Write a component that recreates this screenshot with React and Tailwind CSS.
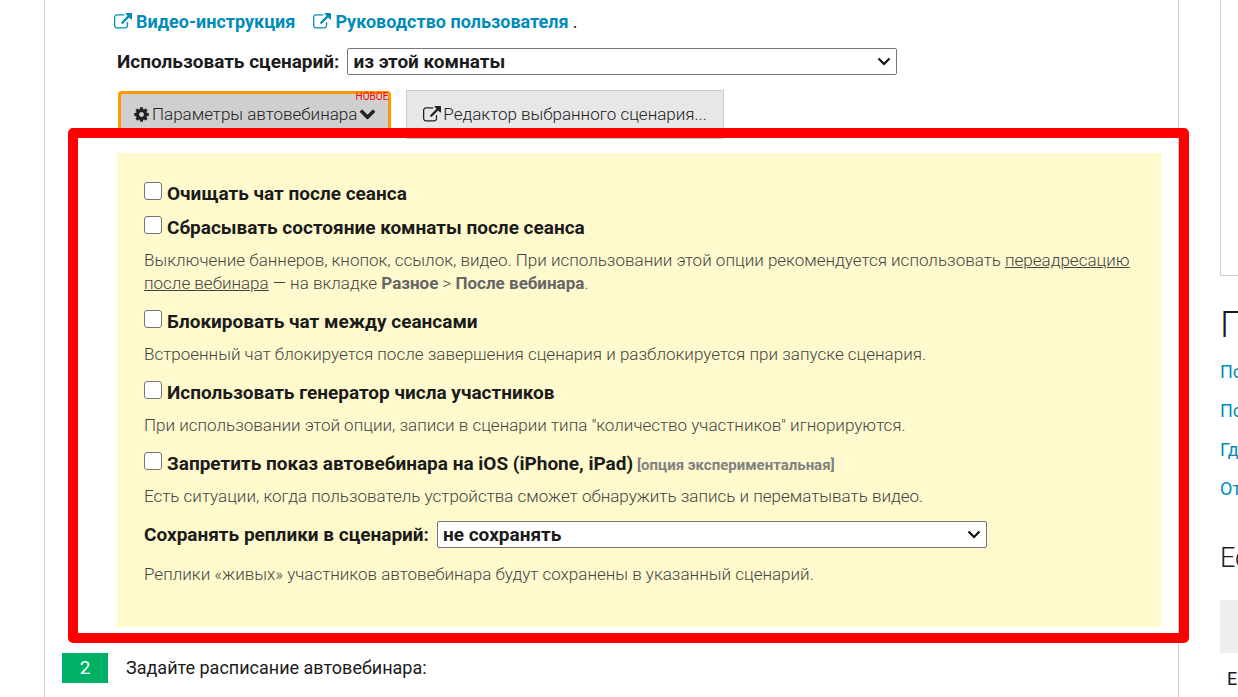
import React from "react";

function Icon({ d, className }) {
  return (
    <svg viewBox="0 0 1792 1792" fill="currentColor" aria-hidden="true" className={className}>
      <path d={d} />
    </svg>
  );
}

const EXTERNAL =
  "M1408 928v320q0 119-84.5 203.5t-203.5 84.5h-832q-119 0-203.5-84.5t-84.5-203.5v-832q0-119 84.5-203.5t203.5-84.5h704q14 0 23 9t9 23v64q0 14-9 23t-23 9h-704q-66 0-113 47t-47 113v832q0 66 47 113t113 47h832q66 0 113-47t47-113v-320q0-14 9-23t23-9h64q14 0 23 9t9 23zm384-864v512q0 26-19 45t-45 19-45-19l-176-176-652 652q-10 10-23 10t-23-10l-114-114q-10-10-10-23t10-23l652-652-176-176q-19-19-19-45t19-45 45-19h512q26 0 45 19t19 45z";
const COG =
  "M1152 896q0-106-75-181t-181-75-181 75-75 181 75 181 181 75 181-75 75-181zm512-109v222q0 12-8 23t-20 13l-185 28q-19 54-39 91 35 50 107 138 10 12 10 25t-9 23q-27 37-99 108t-94 71q-12 0-26-9l-138-108q-44 23-91 38-16 136-29 186-7 28-36 28h-222q-14 0-24.5-8.5t-11.5-21.5l-28-184q-49-16-90-37l-141 107q-10 9-25 9-14 0-25-11-126-114-165-168-7-10-7-23 0-12 8-23 15-21 51-66.5t54-70.5q-27-50-41-99l-183-27q-13-2-21-12.5t-8-23.5v-222q0-12 8-23t19-13l186-28q14-46 39-92-40-57-107-138-10-12-10-24 0-10 9-23 26-36 98.5-107.5t94.5-71.5q13 0 26 10l138 107q44-23 91-38 16-136 29-186 7-28 36-28h222q14 0 24.5 8.5t11.5 21.5l28 184q49 16 90 37l142-107q9-9 24-9 13 0 25 10 129 119 165 170 7 8 7 22 0 12-8 23-15 21-51 66.5t-54 70.5q26 50 41 98l183 28q13 2 21 12.5t8 23.5z";
const CHEVRON =
  "M1683 648l-742 741q-19 19-45 19t-45-19l-742-741q-19-19-19-45.5t19-45.5l166-165q19-19 45-19t45 19l531 531 531-531q19-19 45-19t45 19l166 165q19 19 19 45.5t-19 45.5z";

function ScenarioSelect({ id, label, value }) {
  return (
    <div className="flex items-center gap-2 text-[19px] leading-[27px] font-bold">
      <label htmlFor={id} className="whitespace-nowrap">{label}</label>
      <div className="relative w-[550px]">
        <select
          id={id}
          defaultValue={value}
          className="block h-[27px] w-full appearance-none rounded-[2px] border border-[#767676] bg-white pr-8 pl-[5px] text-[19px] leading-[25px] font-bold"
        >
          <option>{value}</option>
        </select>
        <svg viewBox="0 0 14 9" aria-hidden="true" className="pointer-events-none absolute top-[9px] right-[6px] h-[9px] w-[14px]">
          <path d="M1.5 1.5 L7 7 L12.5 1.5" fill="none" stroke="#111" strokeWidth="2.2" />
        </svg>
      </div>
    </div>
  );
}

function Option({ label, note, children }) {
  return (
    <div>
      <label className="flex h-[34px] items-center gap-[5px] text-[19px] font-bold">
        <input
          type="checkbox"
          className="mb-[6px] size-[18px] shrink-0 appearance-none rounded-[3px] border border-[#767676] bg-white checked:bg-[#0075ff]"
        />
        <span>
          {label}
          {note && <span className="text-[15px] text-[#808080]"> {note}</span>}
        </span>
      </label>
      {children && <Hint className="mt-1">{children}</Hint>}
    </div>
  );
}

function Hint({ className, children }) {
  return (
    <p className={`mb-[10px] text-[17px] leading-[23px] font-light text-[#444] ${className}`}>{children}</p>
  );
}

export default function App() {
  return (
    <div className="flex h-screen overflow-hidden bg-white font-[Roboto,'Liberation_Sans',sans-serif] text-[#1b1b1b]">
      <main className="mr-[41px] ml-11 min-w-0 flex-1 border-x border-[#ccc]">
        <div className="mr-[17px] ml-[72px] pt-[10px]">
          <p className="-ml-[3px] flex items-center text-[18px] leading-6 font-bold">
            <a href="#video" className="mr-[18px] flex items-center gap-1 text-[#008cba]">
              <Icon d={EXTERNAL} className="size-[18px]" />
              Видео-инструкция
            </a>
            <a href="#guide" className="flex items-center gap-1 text-[#008cba]">
              <Icon d={EXTERNAL} className="size-[18px]" />
              Руководство пользователя
            </a>
            <span className="ml-1 font-normal">.</span>
          </p>
          <div className="mt-[14px]">
            <ScenarioSelect id="scenario" label="Использовать сценарий:" value="из этой комнаты" />
          </div>
          <div className="mt-[15px] flex gap-[14px] text-[17px] font-light text-[#222]">
            <button
              type="button"
              className="relative m-px flex h-[47px] items-center gap-[2px] rounded-[4px] border-[3px] border-[#ff9900] bg-[#cfcfcf] px-3 whitespace-nowrap"
            >
              <Icon d={COG} className="size-[17px]" />
              Параметры автовебинара
              <Icon d={CHEVRON} className="size-[17px]" />
              <span className="absolute -top-[3px] right-0 text-[10px] leading-3 font-normal text-[#f00]">НОВОЕ</span>
            </button>
            <button
              type="button"
              className="flex h-[49px] items-center gap-[2px] border border-[#ccc] bg-[#e7e7e7] px-4 whitespace-nowrap"
            >
              <Icon d={EXTERNAL} className="size-[18px]" />
              Редактор выбранного сценария...
            </button>
          </div>
          <section className="relative mt-[14px] bg-[#fffacd] px-[27px] pt-6 pb-[31px]">
            <Option label="Очищать чат после сеанса" />
            <Option label="Сбрасывать состояние комнаты после сеанса">
              Выключение баннеров, кнопок, ссылок, видео. При использовании этой опции рекомендуется использовать{" "}
              <a href="#redirect" className="underline">переадресацию после вебинара</a> — на вкладке{" "}
              <b className="font-bold text-[#666]">Разное</b> &gt; <b className="font-bold text-[#666]">После вебинара</b>.
            </Option>
            <Option label="Блокировать чат между сеансами">
              Встроенный чат блокируется после завершения сценария и разблокируется при запуске сценария.
            </Option>
            <Option label="Использовать генератор числа участников">
              При использовании этой опции, записи в сценарии типа "количество участников" игнорируются.
            </Option>
            <Option label="Запретить показ автовебинара на iOS (iPhone, iPad)" note="[опция экспериментальная]">
              Есть ситуации, когда пользователь устройства сможет обнаружить запись и перематывать видео.
            </Option>
            <div className="pt-[3px]">
              <ScenarioSelect id="save" label="Сохранять реплики в сценарий:" value="не сохранять" />
            </div>
            <Hint className="mt-[15px]">
              Реплики «живых» участников автовебинара будут сохранены в указанный сценарий.
            </Hint>
            <div className="pointer-events-none absolute -top-[25px] -right-7 -bottom-4 -left-[49px] rounded-[5px] border-[10px] border-[#f00]" />
          </section>
        </div>
        <div className="mt-[26px] ml-[17px] flex items-center gap-[18px] text-[18px] leading-[30px]">
          <span className="w-[46px] bg-[#00b067] text-center text-[19px] text-white">2</span>
          <h2>Задайте расписание автовебинара:</h2>
        </div>
      </main>
      <aside className="w-[18px] shrink-0 overflow-hidden whitespace-nowrap">
        <div className="h-[276px] w-[300px] border-b border-l border-[#ccc]" />
        <h2 className="mt-[25px] text-[37px] leading-[48px] font-light">Помощь</h2>
        <ul className="mt-[3px] text-[18px] leading-[39px] text-[#008cba]">
          <li><a href="#start">Подготовка</a></li>
          <li><a href="#help">Помощь</a></li>
          <li><a href="#where">Где найти</a></li>
          <li><a href="#answers">Ответы</a></li>
        </ul>
        <h3 className="mt-[33px] text-[27px] leading-[34px] font-light">Есть вопросы?</h3>
        <div className="mt-[25px] h-[53px] w-[300px] bg-[#efefef]" />
        <p className="mt-[14px] ml-[7px] text-[18px] leading-6">Е</p>
      </aside>
    </div>
  );
}
